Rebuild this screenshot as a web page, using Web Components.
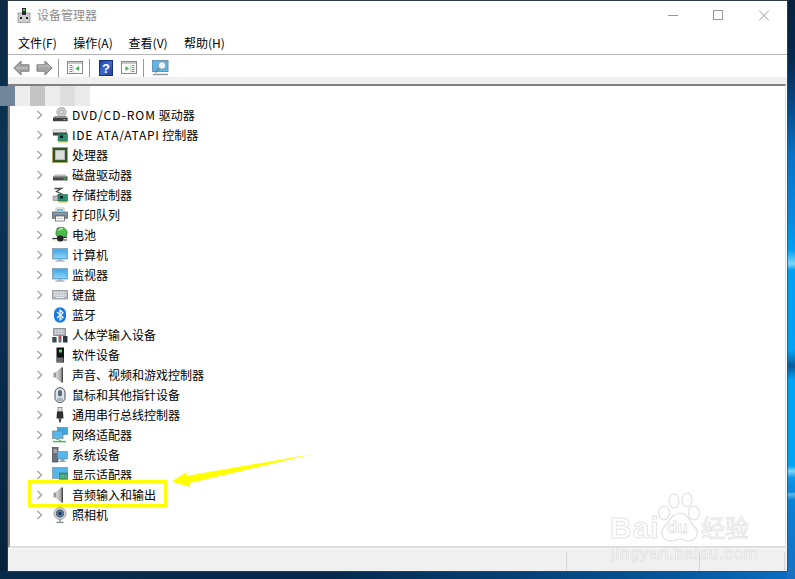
<!DOCTYPE html>
<html lang="zh-CN"><head><meta charset="utf-8"><title>设备管理器</title>
<style>
html,body{margin:0;padding:0;height:579px;overflow:hidden}
body{font-family:"Noto Sans CJK SC","Noto Sans",sans-serif;background:#0a2a4a}
</style></head><body>
<dm-desktop>
  <dm-window>
    <dm-titlebar>设备管理器</dm-titlebar>
    <dm-menubar><dm-menu>文件(F)</dm-menu><dm-menu>操作(A)</dm-menu><dm-menu>查看(V)</dm-menu><dm-menu>帮助(H)</dm-menu></dm-menubar>
    <dm-toolbar></dm-toolbar>
    <dm-tree>
      <dm-row icon="dvd"><span style="letter-spacing:1px">DVD/CD-ROM</span> 驱动器</dm-row>
      <dm-row icon="ide"><span style="letter-spacing:.75px">IDE ATA/ATAPI</span> 控制器</dm-row>
      <dm-row icon="cpu">处理器</dm-row>
      <dm-row icon="disk">磁盘驱动器</dm-row>
      <dm-row icon="storage">存储控制器</dm-row>
      <dm-row icon="printer">打印队列</dm-row>
      <dm-row icon="battery">电池</dm-row>
      <dm-row icon="monitor">计算机</dm-row>
      <dm-row icon="monitor">监视器</dm-row>
      <dm-row icon="keyboard">键盘</dm-row>
      <dm-row icon="bluetooth">蓝牙</dm-row>
      <dm-row icon="hid">人体学输入设备</dm-row>
      <dm-row icon="software">软件设备</dm-row>
      <dm-row icon="speaker">声音、视频和游戏控制器</dm-row>
      <dm-row icon="mouse">鼠标和其他指针设备</dm-row>
      <dm-row icon="usb">通用串行总线控制器</dm-row>
      <dm-row icon="network">网络适配器</dm-row>
      <dm-row icon="system">系统设备</dm-row>
      <dm-row icon="display">显示适配器</dm-row>
      <dm-row icon="speaker">音频输入和输出</dm-row>
      <dm-row icon="camera">照相机</dm-row>
    </dm-tree>
    <dm-statusbar></dm-statusbar>
  </dm-window>
  <dm-annotation></dm-annotation>
  <dm-watermark></dm-watermark>
</dm-desktop>
<script>
const ICONS={
dvd:`<circle cx="9.500" cy="5" r="4.700" fill="#c9c9c9" stroke="#9a9a9a" stroke-width=".6"/><circle cx="9.500" cy="5" r="1.700" fill="#f2f2f2" stroke="#888" stroke-width=".6"/><path d="M1 10.500 3 9h11l1.500 1.500V14H1z" fill="#8d8d8d"/><rect x="1" y="11" width="14.500" height="3.200" fill="#3f3f3f"/><rect x="11.500" y="12" width="2" height="1.200" fill="#3fdc5a"/>`,
ide:`<path d="M1 2.500h13l1 2.500v2H1z" fill="#e4e4e4" stroke="#aaa" stroke-width=".5"/><rect x="1" y="5.500" width="14" height="3" fill="#444"/><rect x="6" y="7" width="9.500" height="7" fill="#2f8f6b" stroke="#1d5e46" stroke-width=".5"/><rect x="8" y="8.500" width="3" height="2.500" fill="#113"/><path d="M6.500 14h9v1.500h-9z" fill="#e7a72a"/>`,
cpu:`<rect x=".5" y=".5" width="15" height="15" fill="#3a4a24" stroke="#b6a24a" stroke-width="1" stroke-dasharray="1 .6"/><rect x="1.500" y="1.500" width="13" height="13" fill="#2f5a2a"/><rect x="3.200" y="3.200" width="9.600" height="9.600" fill="#dcdcd8" stroke="#aaa" stroke-width=".4"/>`,
disk:`<path d="M1 9.500 3 7.500h10.500l1.500 2z" fill="#bdbdbd"/><rect x="1" y="9.500" width="14.500" height="4" fill="#4a4a4a"/><rect x="1" y="9.500" width="14.500" height="1" fill="#8a8a8a"/><rect x="11.500" y="11.300" width="2" height="1.200" fill="#3fdc5a"/>`,
storage:`<path d="M2.500 1.500h7l-5 3 5 2.500-6 3" fill="none" stroke="#4a4a4a" stroke-width="1.300"/><rect x="1" y="9" width="7" height="4.500" fill="#bbb" stroke="#666" stroke-width=".5"/><rect x="6" y="7.500" width="9.500" height="6.500" fill="#2f8f6b" stroke="#1d5e46" stroke-width=".5"/><rect x="8" y="9" width="3" height="2.500" fill="#123"/><path d="M6.500 14h9v1.500h-9z" fill="#e7a72a"/>`,
printer:`<rect x="4" y="1" width="8" height="4.500" fill="#fff" stroke="#888" stroke-width=".5"/><path d="M5 3h6" stroke="#36a9e0" stroke-width="1.400"/><rect x=".5" y="5" width="15" height="6.500" fill="#7e8791" stroke="#4f565e" stroke-width=".6"/><rect x="2" y="6" width="12" height="1.200" fill="#5fb6e6"/><rect x="3.500" y="9" width="9" height="5" fill="#fff" stroke="#555" stroke-width=".7"/><path d="M5 11.500h6" stroke="#aaa" stroke-width=".7"/>`,
battery:`<circle cx="9.500" cy="6" r="5.700" fill="#4dbb4a" stroke="#2a6e2a" stroke-width=".6"/><path d="M6.500 3.500c1-1.500 3-2 4.500-1.500" fill="none" stroke="#c8f2c0" stroke-width="1.300"/><path d="M7 0.500 4.500 2" stroke="#222" stroke-width=".8"/><rect x="5" y="8.500" width="6.500" height="6" rx="2.500" fill="#262626"/><path d="M11.500 10.300h3.500M11.500 13h3.500" stroke="#2c2c2c" stroke-width="1.200"/><path d="M.5 11.500h4.500" stroke="#2c2c2c" stroke-width="1.200"/><path d="M.5 12.800h2.500" stroke="#e2b23a" stroke-width="1"/>`,
monitor:`<rect x=".5" y="1.500" width="15" height="10.500" fill="#54b4ec" stroke="#7a92a6" stroke-width=".7"/><rect x="1.500" y="2.500" width="13" height="8.500" fill="url(#scr)"/><path d="M6.500 12h3v1.600h-3z" fill="#a5b3bd"/><path d="M3.500 14h9" stroke="#8e9ca6" stroke-width="1.100"/>`,
keyboard:`<path d="M.5 3.500h15v8.500H.5z" fill="#b9bec4" stroke="#6e747b" stroke-width=".6"/><path d="M2 5.200h12M2 7h12M2 8.700h12" stroke="#f4f4f4" stroke-width="1" stroke-dasharray="1 .5"/><path d="M4 10.500h8" stroke="#eee" stroke-width="1"/>`,
bluetooth:`<rect x="2" y=".3" width="12" height="15.400" rx="6" fill="#1a78e0"/><path d="M5 5l6 5.300-3 2.700V3l3 2.700L5 11" fill="none" stroke="#fff" stroke-width="1.200"/>`,
hid:`<path d="M1.500 1.500h12v7h-12z" fill="#aeb4ba" stroke="#5d646b" stroke-width=".6"/><path d="M3 3h9M3 4.700h9M3 6.400h9" stroke="#f2f2f2" stroke-width=".9" stroke-dasharray="1 .5"/><path d="M.3 15.500V10h4.300v5.500z" fill="#3e4752"/><path d="M6.500 15.500v-6h3v6z" fill="#666e78"/><path d="M11 15.500V9h4.500v6.500z" fill="#2f3740"/><circle cx="8" cy="9.500" r="1.300" fill="#d8483a"/>`,
software:`<rect x="4.500" y=".5" width="7.500" height="15" fill="#111"/><rect x="5" y="10.500" width="6.500" height="4.500" fill="#6b6b6b"/><rect x="7" y="2.500" width="3" height="3" fill="#45e04f"/>`,
speaker:`<defs><linearGradient id="spk" x1="0" x2="1"><stop offset="0" stop-color="#e2e2e2"/><stop offset="1" stop-color="#9a9a9a"/></linearGradient></defs><path d="M1.500 5.500h2.500v5H1.500z" fill="#9a9a9a"/><path d="M4 5.500 9.500 .7v14.600L4 10.500z" fill="url(#spk)" stroke="#8c8c8c" stroke-width=".4"/><path d="M9.500 .5v15H11V.5z" fill="#4a4a4a"/>`,
mouse:`<rect x="3" y=".7" width="10" height="14.800" rx="4.800" fill="#dde3ea" stroke="#39424d" stroke-width=".9"/><rect x="6" y="3" width="4" height="6.500" rx="2" fill="#5c6a7a"/><rect x="5" y="11" width="6" height="3" rx="1.500" fill="#a7afb8"/>`,
usb:`<rect x="6" y=".5" width="4" height="4" fill="#e2e2e2" stroke="#555" stroke-width=".6"/><path d="M5 4.500h6l.5 7h-7z" fill="#2f2f2f"/><path d="M6.500 11.500h3l-.7 2.600v1.400H7.200v-1.400z" fill="#3a3a3a"/>`,
network:`<rect x="5.500" y=".5" width="10" height="7" fill="#3ea7e2" stroke="#5b7389" stroke-width=".6"/><rect x=".5" y="4" width="10.500" height="7.500" fill="#57b6ec" stroke="#5b7389" stroke-width=".6"/><path d="M4 11.500h3.500v1.500H4z" fill="#9fb0bb"/><path d="M1 14.600h13" stroke="#4dbf4d" stroke-width="1.500"/><path d="M8 13v2" stroke="#2d8c2d"/>`,
system:`<rect x=".5" y=".5" width="5.500" height="14.500" fill="#6a6f75" stroke="#33383d" stroke-width=".6"/><path d="M1.500 3h3.500M1.500 5h3.500" stroke="#dcdcdc"/><rect x="5.500" y="4.500" width="10" height="7.500" fill="#55b5ec" stroke="#6d8597" stroke-width=".6"/><path d="M9 12h3v1.500H9zM7 14.300h7" stroke="#8b9aa4" fill="#a7b4bd"/>`,
display:`<rect x=".5" y=".5" width="15" height="11" fill="#54b4ec" stroke="#7a92a6" stroke-width=".7"/><rect x="7.500" y="6" width="8" height="6.500" fill="#3c9a6d" stroke="#246a49" stroke-width=".5"/><path d="M7.800 8.500h7M7.800 10.200h7" stroke="#a4d9bb" stroke-width=".7" stroke-dasharray="1 .6"/><path d="M7.500 12.500h8v2.500h-8z" fill="#e5a52b"/>`,
camera:`<circle cx="8" cy="6.500" r="6" fill="#d5d8db" stroke="#7e858c" stroke-width=".7"/><circle cx="8" cy="6.500" r="3.700" fill="#5c7da0" stroke="#39495a" stroke-width=".8"/><circle cx="8" cy="6.500" r="1.700" fill="#163a6e"/><path d="M8 12.500v2M4.500 15.300h7" stroke="#80878e" stroke-width="1.300"/>`
};
const def=(name,html)=>{customElements.define(name,class extends HTMLElement{
  constructor(){super();const s=this.attachShadow({mode:'open'});s.innerHTML=typeof html==='function'?html(this):html;}
})};
def('dm-desktop',`<style>:host{display:block;position:relative;width:795px;height:579px;box-sizing:border-box;padding:1px 8px 8px 8px;overflow:hidden;
background:
linear-gradient(180deg,#06203c 0,#062a50 60px,#06457f 100px,#0a72c4 155px,#0a8ae0 220px,#00a0f0 250px,#7fd4f8 264px,#00a0f0 270px,#00a4f4 350px,#0a5a9a 366px,#00a4f4 380px,#00a4f4 466px,#7fd4f8 471px,#0a96e8 478px,#0a86dc 492px,#5cb8ec 494px,#0a80d4 500px,#1a6fc0 579px) right top/8px 100% no-repeat,
linear-gradient(90deg,#0a2a4a 0,#06284a 40%,#05437a 68%,#06579c 85%,#0a6ec4 100%) left bottom/100% 8px no-repeat,
linear-gradient(180deg,#0c2a46 0,#0a3558 30%,#082d50 60%,#06213c 100%) left top/8px 100% no-repeat,
#0a2a4a}</style><slot></slot>`);
def('dm-window',`<style>:host{display:flex;flex-direction:column;height:570px;background:#fff;color:#000;font:12px/16px "Noto Sans CJK SC","Noto Sans",sans-serif;box-shadow:0 0 0 1px rgba(70,70,70,.7)}</style><slot></slot>`);
def('dm-titlebar',`<style>:host{display:flex;align-items:center;height:33px;box-sizing:border-box;padding:0 18px 5px 9px;color:#8c8c8c}
.t{margin-left:6px}.i{display:block}.c{margin-left:auto;display:flex;gap:35px}
.c svg{display:block;width:10px;height:11px}</style>
<svg class="i" width="14" height="16" viewBox="0 0 14 16"><rect x="1" y="6" width="12" height="9.500" fill="#cfcfcf" stroke="#777" stroke-width=".6"/><rect x="5" y="1" width="4" height="7" fill="#2e2e2e"/><rect x="6" y="2" width="2" height="2" fill="#3fdc5a"/><rect x="3" y="10" width="2" height="2" fill="#222"/><rect x="9" y="10" width="2" height="2" fill="#222"/></svg>
<span class="t"><slot></slot></span>
<span class="c">
<svg viewBox="0 0 10 11"><path d="M0 5.500h10" stroke="#999"/></svg>
<svg viewBox="0 0 10 11"><rect x=".5" y=".5" width="9" height="9" fill="none" stroke="#999"/></svg>
<svg viewBox="0 0 10 11" style="margin-left:1px"><path d="M0 .5l10 10M10 .5l-10 10" stroke="#999"/></svg>
</span>`);
def('dm-menubar',`<style>:host{display:flex;height:21px;box-sizing:border-box;padding:0 0 3px 10px;border-bottom:1px solid #b4b4b4;align-items:center}</style><slot></slot>`);
def('dm-menu',`<style>:host{display:block;width:55.300px;color:#000;white-space:nowrap}</style><slot></slot>`);
const arrow=(d)=>`<svg width="17" height="16" viewBox="0 0 17 16"><path d="${d<0?'M.8 8 8 1v3.800h8v6.400H8V15z':'M16.200 8 9 1v3.800H1v6.400h8V15z'}" fill="#a6a6a6" stroke="#7c7c7c"/><path d="${d<0?'M3 8h12':'M2 6h12'}" stroke="#c6c6c6" stroke-width="1"/></svg>`;
const win=(m)=>`<svg width="16" height="13" viewBox="0 0 16 13"><rect x=".5" y=".5" width="15" height="12" fill="#fff" stroke="#8a8a8a"/><rect x="1" y="1" width="14" height="2" fill="#c4c8cc"/>${m}</svg>`;
const sp=(w)=>`<span style="width:${w}px;flex:none"></span>`;
def('dm-toolbar',`<style>:host{display:flex;align-items:center;height:29px;box-sizing:border-box;padding:3px 0 0 5px;border-bottom:7px solid #f0f0f0}
svg{display:block;flex:none}i{display:block;width:1px;height:18px;background:#9a9a9a;flex:none}</style>
${arrow(-1)}${sp(6)}${arrow(1)}${sp(5)}<i></i>${sp(8)}
${win('<path d="M2.500 4.500h2.500M2.500 6.500h2.500M2.500 8.500h2.500M2.500 10.500h2.500" stroke="#5b8fc4"/><path d="M6 4.500v7" stroke="#b5b5b5"/><path d="M12 5v5L8.500 7.500z" fill="#35b548"/>')}
${sp(6)}<i></i>${sp(9)}
<svg width="14" height="16" viewBox="0 0 14 16"><defs><linearGradient id="h" x1="0" y1="0" x2="1" y2="1"><stop offset="0" stop-color="#1c3b9c"/><stop offset=".5" stop-color="#3f69d0"/><stop offset="1" stop-color="#1c3b9c"/></linearGradient></defs><rect x=".5" y=".5" width="13" height="15" fill="url(#h)" stroke="#16307e"/><text x="7" y="13" text-anchor="middle" font-size="13" font-weight="700" font-family="Liberation Sans" fill="#fff">?</text></svg>
${sp(8)}
${win('<path d="M11 4.500h2.500M11 6.500h2.500M11 8.500h2.500M11 10.500h2.500" stroke="#5b8fc4"/><path d="M10 4.500v7" stroke="#b5b5b5"/><path d="M4.500 5v5L8 7.500z" fill="#35b548"/>')}
${sp(6)}<i></i>${sp(8)}
<svg width="17" height="16" viewBox="0 0 17 16"><rect x=".5" y=".5" width="15.500" height="11" fill="#58b7ef" stroke="#6b93ad"/><circle cx="10" cy="5.500" r="3.800" fill="#e9f6fd" stroke="#8a98a2"/><path d="M7.300 8.300 3.500 12.500" stroke="#7c7c7c" stroke-width="1.500"/><path d="M1 14.500h15" stroke="#8e9ca6" stroke-width="1.500"/></svg>`);
def('dm-tree',`<style>:host{display:block;flex:1;min-height:0;box-sizing:border-box;margin:0 1px 0 0;border-top:2px solid #808080;border-left:2px solid #8c8c8c;border-right:1px solid #dcdcdc;border-bottom:2px solid #dedede;padding-top:19px;background:#fff}</style><slot></slot>`);
def('dm-row',(el)=>`<style>:host{display:flex;align-items:center;height:20px;color:#000;white-space:nowrap}
.ch{width:8px;height:10px;margin-left:26px;flex:none;display:block}.ic{width:16px;height:16px;margin-left:8px;flex:none;display:block}.tx{margin-left:4px}</style>
<svg class="ch" viewBox="0 0 8 10"><path d="M1.500 1l4 4-4 4" fill="none" stroke="#a6a6a6" stroke-width="1.400"/></svg>
<svg class="ic" viewBox="0 0 16 16"><defs><linearGradient id="scr" x1="0" y1="0" x2="0" y2="1"><stop offset="0" stop-color="#3fa5e4"/><stop offset="1" stop-color="#8fd3f6"/></linearGradient></defs>${ICONS[el.getAttribute('icon')]||''}</svg>
<span class="tx"><slot></slot></span>`);
def('dm-statusbar',`<style>:host{display:grid;grid-template-columns:1fr 133px 85px 3px;height:23px;box-sizing:border-box;background:#f0f0f0;border-top:1px solid #f7f7f7;padding-top:3px}
span+span{border-left:1px solid #d4d4d4}</style><span></span><span></span><span></span><span></span>`);
def('dm-annotation',`<style>:host{position:absolute;left:0;top:0;width:795px;height:579px;display:block;pointer-events:none}
.blur{position:absolute;left:0;top:86px;height:20px;display:flex;filter:blur(.6px)}.blur b{display:block;width:15px;height:20px}
.box{position:absolute;left:28px;top:480px;width:133px;height:21px;border:3px solid #ffff00}
svg{position:absolute;left:0;top:0}</style>
<div class="blur"><b style="background:#71859a"></b><b style="background:#ededed"></b><b style="background:#c4c4c4"></b><b style="background:#ededed"></b><b style="background:#dedede"></b><b style="background:#eaeaea"></b></div>
<div class="box"></div>
<svg width="795" height="579" viewBox="0 0 795 579"><path d="M171.500 481.500 187 472 186 476 313 454 190 483 190 487z" fill="#ffff00"/></svg>`);
def('dm-watermark',`<style>:host{position:absolute;left:600px;top:485px;width:160px;height:82px;display:block;pointer-events:none;font-family:"Liberation Sans",sans-serif;color:rgba(255,255,255,.55);filter:blur(.35px)}
span{position:absolute;-webkit-text-stroke:1px rgba(205,205,205,.55);white-space:nowrap}
svg{position:absolute;left:0;top:0}</style>
<svg width="160" height="82" viewBox="0 0 160 82" fill="rgba(255,255,255,.5)" stroke="rgba(205,205,205,.6)" stroke-width="1.200">
<ellipse cx="72" cy="9.500" rx="0" ry="0"/><ellipse cx="74" cy="16" rx="5" ry="7"/><ellipse cx="87" cy="15" rx="5" ry="7"/><ellipse cx="64" cy="28" rx="5.500" ry="7"/><ellipse cx="94" cy="28" rx="5.500" ry="7"/><path d="M80 28c8 0 9 8 14 13 6 6 3 15-6 15-4 0-5-2-8-2s-5 2-9 2c-9 0-12-9-6-15 5-5 7-13 15-13z"/></svg>
<span style="left:10px;top:26px;font-size:30px;font-weight:700;letter-spacing:1px">Bai</span>
<span style="left:67px;top:33px;font-size:17px;font-weight:700">du</span>
<span style="left:101px;top:27px;font-size:24px;font-family:'Noto Sans CJK SC',sans-serif;line-height:30px">经验</span>
<span style="left:11px;top:59px;font-size:17px;letter-spacing:.6px;-webkit-text-stroke-width:.7px">jingyan.baidu.com</span>`);
</script></body></html>
